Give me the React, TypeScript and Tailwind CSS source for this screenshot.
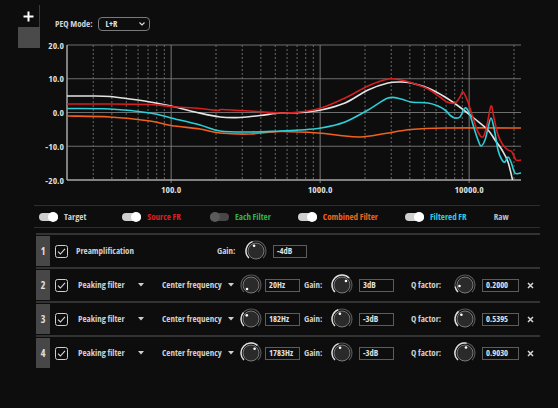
import React from "react";

// chart geometry is in page pixels, the svg sits at (40, 38)
const OX = 40;
const OY = 38;
const fx = (f: number) => 67 + 149 * Math.log10(f / 20) - OX;
const dy = (db: number) => 112.5 - 3.375 * db - OY;

const curve = (pts: number[][]) => {
  const p = pts.map(([x, y]) => [x - OX, y - OY]);
  let d = `M${p[0][0]},${p[0][1]}`;
  for (let i = 0; i < p.length - 1; i++) {
    const a = p[i - 1] || p[i];
    const b = p[i];
    const c = p[i + 1];
    const e = p[i + 2] || c;
    const c1x = b[0] + (c[0] - a[0]) / 6;
    const c1y = b[1] + (c[1] - a[1]) / 6;
    const c2x = c[0] - (e[0] - b[0]) / 6;
    const c2y = c[1] - (e[1] - b[1]) / 6;
    d += ` C${c1x.toFixed(1)},${c1y.toFixed(1)} ${c2x.toFixed(1)},${c2y.toFixed(1)} ${c[0]},${c[1]}`;
  }
  return d;
};

const target = [
  [67, 96], [90, 96], [110, 96.5], [130, 99], [150, 102], [171, 106], [195, 112], [220, 117],
  [240, 117.5], [260, 115.5], [280, 113], [300, 112.5], [321, 110], [345, 103], [368, 90],
  [388, 83], [401, 82], [411, 83], [428, 88], [445, 97], [461, 108], [475, 119], [488, 130],
  [495, 140], [502, 150], [508, 162], [513, 182],
];
const source = [
  [67, 104], [100, 104], [150, 104.5], [171, 106.5], [200, 108.5], [218, 110.5], [222, 109.5],
  [250, 111], [280, 113], [300, 112], [321, 108], [345, 98], [368, 86], [388, 79], [401, 80],
  [415, 84], [428, 89], [440, 97], [447, 102], [455, 103], [460, 97], [463, 92], [468, 102],
  [473, 118], [478, 132], [483, 137], [487, 125], [491, 106], [494, 118], [498, 135],
  [503, 145], [508, 150], [512, 152], [516, 160], [521, 160],
];
const filtered = [
  [67, 108.5], [110, 109], [150, 113], [171, 118], [200, 125], [220, 131], [250, 132],
  [280, 131], [300, 130], [321, 128], [345, 122], [368, 110], [388, 98], [401, 99], [411, 102],
  [428, 103], [438, 106], [445, 110], [451, 116], [455, 118], [460, 117], [463, 111],
  [466, 108], [470, 115], [474, 128], [478, 140], [481, 146], [485, 140], [488, 128],
  [491, 118], [494, 128], [498, 150], [502, 160], [505, 162], [508, 157], [511, 162],
  [515, 173], [521, 173],
];
const combined = [
  [67, 116], [110, 117], [150, 121], [171, 125.5], [200, 129], [220, 133], [250, 134],
  [280, 131.5], [318, 133], [340, 135.5], [361, 137], [385, 133.5], [411, 129.5], [445, 128],
  [521, 128],
];

const dashed = [
  30, 40, 50, 60, 70, 80, 90, 200, 300, 400, 500, 600, 700, 800, 900, 2000, 3000, 4000, 5000,
  6000, 7000, 8000, 9000, 20000,
];

function Chart() {
  const x0 = fx(20);
  const x1 = 521 - OX;
  const y0 = dy(20);
  const y1 = dy(-20);
  return (
    <svg width={490} height={160} className="block">
      <defs>
        <clipPath id="plot">
          <rect x={x0} y={y0} width={x1 - x0} height={y1 - y0} />
        </clipPath>
      </defs>
      {[20, 10, 0, -10].map((db) => (
        <line key={db} x1={x0} x2={x1} y1={dy(db)} y2={dy(db)} stroke="#6e6e6e" strokeWidth={1} />
      ))}
      {dashed.map((f) => (
        <line key={f} x1={fx(f)} x2={fx(f)} y1={y0} y2={y1} stroke="#6a6a6a" strokeWidth={1} strokeDasharray="2 2" />
      ))}
      {[100, 1000, 10000].map((f) => (
        <line key={f} x1={fx(f)} x2={fx(f)} y1={y0} y2={y1 + 3} stroke="#7a7a7a" strokeWidth={1} />
      ))}
      <line x1={x0} x2={x0} y1={y0} y2={y1} stroke="#a8a8a8" strokeWidth={1.5} />
      <line x1={x0} x2={x1} y1={y1} y2={y1} stroke="#a8a8a8" strokeWidth={1.5} />

      <g clipPath="url(#plot)" fill="none" strokeWidth={1.6} strokeLinejoin="round">
        <path d={curve(combined)} stroke="#f0621c" />
        <path d={curve(target)} stroke="#e4e4e4" />
        <path d={curve(filtered)} stroke="#2ccfd8" />
        <path d={curve(source)} stroke="#d81e1e" />
      </g>

      <g fill="#dcdcdc" fontSize={9.5} fontWeight={700}>
        {[20, 10, 0, -10, -20].map((db) => (
          <text key={db} x={x0 - 3} y={dy(db) + 3.5} textAnchor="end">
            {db.toFixed(1)}
          </text>
        ))}
        {[100, 1000, 10000].map((f) => (
          <text key={f} x={fx(f)} y={189 - OY + 3.5} textAnchor="middle">
            {f.toFixed(1)}
          </text>
        ))}
      </g>
    </svg>
  );
}

function Toggle({ on }: { on: boolean }) {
  return on ? (
    <div className="w-[19px] h-[8px] rounded-full bg-[#cfcfcf] flex items-center justify-end">
      <div className="w-[10px] h-[10px] rounded-full bg-white" />
    </div>
  ) : (
    <div className="w-[19px] h-[8px] rounded-full bg-[#474747] flex items-center justify-start">
      <div className="w-[10px] h-[10px] rounded-full bg-[#5a5a5a]" />
    </div>
  );
}

function Knob({ angle }: { angle: number }) {
  const pt = (a: number, r: number) => {
    const t = (a * Math.PI) / 180;
    return [11 + r * Math.sin(t), 11 - r * Math.cos(t)];
  };
  const arc = (a0: number, a1: number, r: number) => {
    const [sx, sy] = pt(a0, r);
    const [ex, ey] = pt(a1, r);
    return `M${sx},${sy} A${r},${r} 0 ${a1 - a0 > 180 ? 1 : 0} 1 ${ex},${ey}`;
  };
  const [dx, dY] = pt(angle, 5.6);
  return (
    <svg width={22} height={22} className="shrink-0">
      <path d={arc(-135, 135, 10)} fill="none" stroke="#555" strokeWidth={1.2} />
      {angle > -134 && <path d={arc(-135, angle, 10)} fill="none" stroke="#dedede" strokeWidth={1.4} />}
      <circle cx={11} cy={11} r={8} fill="#2a2a2a" stroke="#7a7a7a" strokeWidth={1} />
      <circle cx={dx} cy={dY} r={1.3} fill="#fff" />
    </svg>
  );
}

function Check() {
  return (
    <svg width={13} height={13} className="shrink-0">
      <rect x={0.5} y={0.5} width={12} height={12} rx={2} fill="none" stroke="#cfcfcf" strokeWidth={1} />
      <path d="M3 6.6 L5.4 9 L10 3.8" fill="none" stroke="#dcdcdc" strokeWidth={1.1} />
    </svg>
  );
}

function Caret() {
  return (
    <svg width={6} height={4} className="shrink-0">
      <path d="M0 0 H6 L3 3.5 Z" fill="#cfcfcf" />
    </svg>
  );
}

function Field({ value, w }: { value: string; w: string }) {
  return (
    <div className={`${w} h-[13px] border border-[#5c5c5c] flex items-center pl-[3px] text-[8.5px] text-[#e0e0e0] overflow-hidden`}>
      {value}
    </div>
  );
}

const filters = [
  { n: 2, freq: "20Hz", fa: -135, gain: "3dB", ga: 45, q: "0.2000", qa: -100 },
  { n: 3, freq: "182Hz", fa: -49, gain: "-3dB", ga: -22, q: "0.5395", qa: -40 },
  { n: 4, freq: "1783Hz", fa: 40, gain: "-3dB", ga: -20, q: "0.9030", qa: 10 },
];

function Num({ n }: { n: number }) {
  return (
    <div className="w-[14px] h-full bg-[#474747] flex items-center justify-center text-[10px] text-[#e0e0e0]">
      {n}
    </div>
  );
}

export default function App() {
  return (
    <div className="w-[558px] h-[408px] overflow-hidden whitespace-nowrap bg-[#0d0d0e] text-[#cfcfcf] font-bold font-stretch-condensed font-['Open_Sans',Roboto,sans-serif]">
      {/* TOP: tabs + mode + chart */}
      <div className="flex">
        <div className="w-[40px] pl-[18px] pt-[5px] flex flex-col">
          <div className="w-[22px] h-[22px] border-r border-[#3a3a3a] flex items-center justify-center">
            <svg width={11} height={11}>
              <path d="M5.5 0.5 V10.5 M0.5 5.5 H10.5" stroke="#fff" strokeWidth={2} />
            </svg>
          </div>
          <div className="w-[22px] h-[21px] bg-[#4a4a4a]" />
        </div>

        <div className="flex flex-col">
          <div className="mt-[17px] ml-[15px] h-[14px] flex items-center gap-[5px] text-[9px]">
            <span className="text-[#d0d0d0]">PEQ Mode:</span>
            <div className="w-[52px] h-[14px] border border-[#7a7a7a] rounded-[4px] flex items-center justify-between pl-[7px] pr-[4px] text-[8.5px] text-[#e0e0e0]">
              <span>L+R</span>
              <svg width={6} height={4}>
                <path d="M0.5 0.5 L3 3 L5.5 0.5" fill="none" stroke="#ddd" strokeWidth={1.1} />
              </svg>
            </div>
          </div>
          <div className="mt-[7px]">
            <Chart />
          </div>
        </div>
      </div>

      {/* LEGEND */}
      <div className="ml-[34px] w-[506px] mt-[7px] border-t border-[#2e2e2e] border-b h-[23px] pl-[5px] flex items-center text-[9px]">
        <div className="flex items-center gap-[6px] mr-[36px]">
          <Toggle on />
          <span className="text-[#cfcfcf]">Target</span>
        </div>
        <div className="flex items-center gap-[6px] mr-[29px]">
          <Toggle on />
          <span className="text-[#dd2020]">Source FR</span>
        </div>
        <div className="flex items-center gap-[6px] mr-[27px]">
          <Toggle on={false} />
          <span className="text-[#2fb548]">Each Filter</span>
        </div>
        <div className="flex items-center gap-[6px] mr-[27px]">
          <Toggle on />
          <span className="text-[#f0621c]">Combined Filter</span>
        </div>
        <div className="flex items-center gap-[6px] mr-[27px]">
          <Toggle on />
          <span className="text-[#2ccfd8]">Filtered FR</span>
        </div>
        <span className="text-[#bdbdbd]">Raw</span>
      </div>

      {/* FILTERS */}
      <div className="ml-[36px] w-[504px] mt-[5px] text-[9px]">
        <div className="border-t-2 border-[#333] pt-[1px] pb-[1px]">
          <div className="h-[30px] flex items-center">
            <Num n={1} />
            <div className="ml-[5px]"><Check /></div>
            <span className="ml-[8px] w-[141px]">Preamplification</span>
            <span className="w-[28px]">Gain:</span>
            <Knob angle={-20} />
            <div className="ml-[6px]"><Field value="-4dB" w="w-[34px]" /></div>
          </div>
        </div>
        {filters.map((f) => (
          <div key={f.n} className="border-t-2 border-[#333] pt-[1px] pb-[1px]">
            <div className="h-[30px] flex items-center">
              <Num n={f.n} />
              <div className="ml-[5px]"><Check /></div>
              <div className="ml-[10px] w-[66px] flex items-center justify-between">
                <span>Peaking filter</span>
                <Caret />
              </div>
              <div className="ml-[18px] w-[72px] flex items-center justify-between">
                <span>Center frequency</span>
                <Caret />
              </div>
              <div className="ml-[6px]"><Knob angle={f.fa} /></div>
              <div className="ml-[3px]"><Field value={f.freq} w="w-[35px]" /></div>
              <span className="ml-[4px] w-[27px]">Gain:</span>
              <Knob angle={f.ga} />
              <div className="ml-[6px]"><Field value={f.gain} w="w-[35px]" /></div>
              <span className="ml-[17px] w-[43px]">Q factor:</span>
              <Knob angle={f.qa} />
              <div className="ml-[6px]"><Field value={f.q} w="w-[37px]" /></div>
              <svg width={7} height={7} className="ml-[8px]">
                <path d="M1 1 L6 6 M6 1 L1 6" stroke="#d6d6d6" strokeWidth={1.5} />
              </svg>
            </div>
          </div>
        ))}
      </div>
    </div>
  );
}
